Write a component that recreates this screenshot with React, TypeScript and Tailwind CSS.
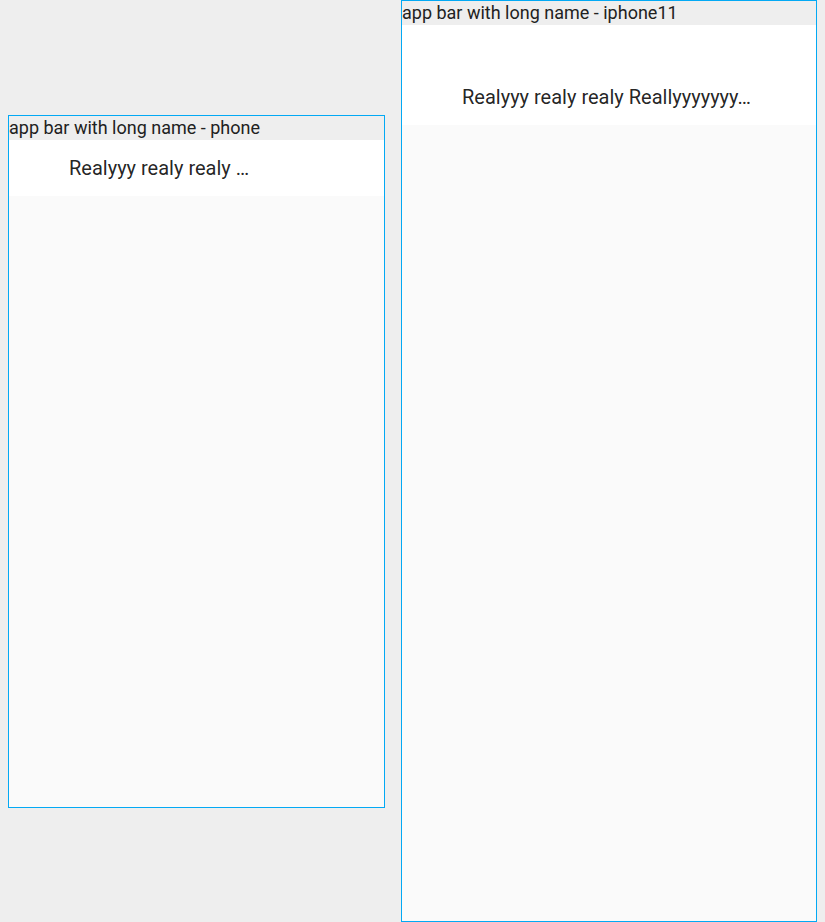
import React from "react";

// Device previews: label strip + app bar + empty body
const devices = [
    {
        name: "phone",
        width: "w-[375px]",
        height: "h-[667px]",
        statusBar: "pt-0",
        title: "Realyyy realy realy …",
    },
    {
        name: "iphone11",
        width: "w-[414px]",
        height: "h-[896px]",
        statusBar: "pt-[44px]",
        title: "Realyyy realy realy Reallyyyyyyy…",
    },
];

export default function App() {
    return (
        <div
            className="w-full h-[922px] bg-[#eeeeee] flex items-center gap-4 px-2"
            style={{ fontFamily: "Roboto, 'Noto Sans', sans-serif" }}
        >
            {devices.map((device) => (
                <div key={device.name} className="border border-[#03a9f4] flex flex-col">
                    <div className="h-[24px] leading-[24px] text-[18px] text-[#212121] bg-[#eeeeee] whitespace-nowrap">
                        app bar with long name - {device.name}
                    </div>
                    <div className={`${device.width} ${device.height} bg-[#fafafa] flex flex-col`}>
                        <div className={`bg-white ${device.statusBar}`}>
                            <div className="h-[56px] flex items-center pl-[60px]">
                                <span className="text-[20px] text-black/87 whitespace-nowrap">
                                    {device.title}
                                </span>
                            </div>
                        </div>
                    </div>
                </div>
            ))}
        </div>
    );
}
